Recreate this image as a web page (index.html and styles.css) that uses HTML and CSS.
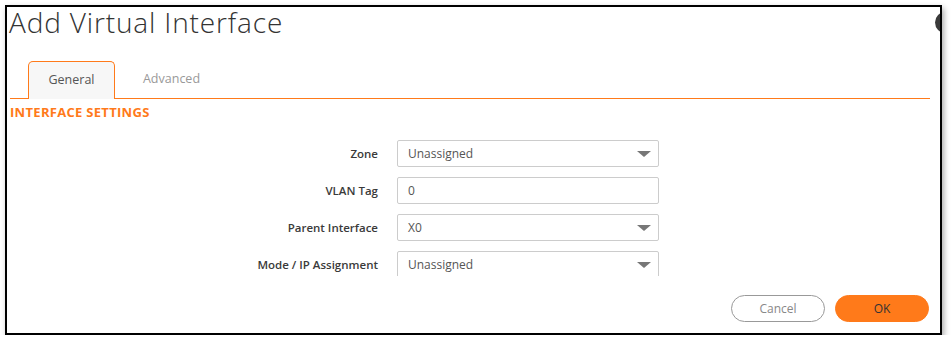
FILE: index.html
```html
<!DOCTYPE html>
<html lang="en">
<head>
  <meta charset="UTF-8" />
  <title>Add Virtual Interface</title>
  <link rel="stylesheet" href="styles.css">
</head>
<body>
  <div class="frame">
    <span class="close-dot"></span>
    <h1 class="title">Add Virtual Interface</h1>

    <div class="tabs">
      <div class="tab active">General</div>
      <div class="tab">Advanced</div>
    </div>

    <div class="section-title">INTERFACE SETTINGS</div>

    <div class="form-area">
      <div class="row">
        <label class="label">Zone</label>
        <div class="field select">Unassigned<span class="caret"></span></div>
      </div>
      <div class="row">
        <label class="label">VLAN Tag</label>
        <div class="field">0</div>
      </div>
      <div class="row">
        <label class="label">Parent Interface</label>
        <div class="field select">X0<span class="caret"></span></div>
      </div>
      <div class="row">
        <label class="label">Mode / IP Assignment</label>
        <div class="field select">Unassigned<span class="caret"></span></div>
      </div>
    </div>

    <div class="footer">
      <button class="btn btn-cancel">Cancel</button>
      <button class="btn btn-ok">OK</button>
    </div>
  </div>
</body>
</html>
```

FILE: styles.css
```css
body {
    margin: 0;
    background: #ffffff;
    font-family: 'Open Sans', 'Noto Sans', sans-serif;
    color: #333;
}
.frame {
    position: relative;
    margin: 5px 0 0 5px;
    width: 933px;
    height: 326px;
    border: 2px solid #000;
    box-shadow: 2px 3px 6px rgba(0, 0, 0, 0.35);
    background: #fff;
}
/* close button, mostly hidden behind the frame edge */
.close-dot {
    position: absolute;
    top: 5px;
    right: 0;
    width: 5px;
    height: 21px;
    overflow: hidden;
}
.close-dot::before {
    content: "";
    display: block;
    width: 21px;
    height: 21px;
    border-radius: 50%;
    background: #3a3a3a;
}
.title {
    margin: 0;
    padding: 0 0 0 2px;
    font-size: 28px;
    font-weight: 300;
    line-height: 31px;
    color: #333;
    letter-spacing: 0.85px;
}
.tabs {
    display: flex;
    margin: 23px 10px 0 3px;
    border-bottom: 1px solid #ff7a1a;
    height: 37px;
}
.tab {
    width: 85px;
    text-align: center;
    font-size: 12.5px;
    line-height: 36px;
    color: #999;
    margin-left: 14px;
}
.tab.active {
    margin-left: 18px;
    background: #f7f7f7;
    color: #555;
    border: 1px solid #ff7a1a;
    border-bottom: none;
    border-radius: 5px 5px 0 0;
    margin-bottom: -1px;
}
.section-title {
    margin: 5px 0 0 3px;
    font-size: 13px;
    font-weight: 700;
    color: #ff7a1a;
    line-height: 16px;
    letter-spacing: 0.3px;
}
.form-area {
    margin-top: 20px;
    height: 136px;
    overflow: hidden;
    display: flex;
    flex-direction: column;
    gap: 10px;
}
.row {
    display: flex;
    align-items: center;
    flex-shrink: 0;
}
.label {
    width: 371px;
    text-align: right;
    font-size: 11.5px;
    font-weight: 600;
    color: #3a3a3a;
    padding-right: 19px;
}
.field {
    position: relative;
    box-sizing: border-box;
    width: 262px;
    height: 27px;
    border: 1px solid #ccc;
    border-radius: 2px;
    padding-left: 10px;
    font-size: 12px;
    line-height: 25px;
    color: #555;
}
.caret {
    position: absolute;
    right: 7px;
    top: 10px;
    width: 0;
    height: 0;
    border-left: 7px solid transparent;
    border-right: 7px solid transparent;
    border-top: 6px solid #777;
}
.footer {
    display: flex;
    justify-content: flex-end;
    gap: 10px;
    margin: 19px 11px 0 0;
}
.btn {
    width: 94px;
    height: 27px;
    border-radius: 14px;
    font-family: 'Open Sans', 'Noto Sans', sans-serif;
    font-size: 12px;
    cursor: pointer;
}
.btn-cancel {
    background: #fff;
    border: 1px solid #999;
    color: #888;
}
.btn-ok {
    background: #ff7a1a;
    border: 1px solid #ff7a1a;
    color: #333;
}
```
